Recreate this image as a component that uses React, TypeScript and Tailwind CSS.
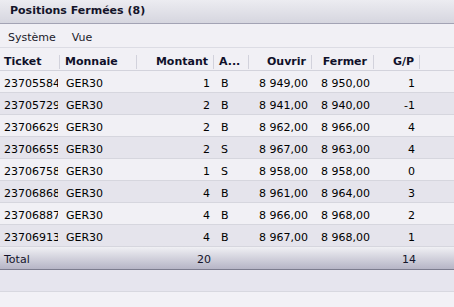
import React from "react";

const rows = [
  ["23705584", "GER30", "1", "B", "8 949,00", "8 950,00", "1"],
  ["23705729", "GER30", "2", "B", "8 941,00", "8 940,00", "-1"],
  ["23706629", "GER30", "2", "B", "8 962,00", "8 966,00", "4"],
  ["23706655", "GER30", "2", "S", "8 967,00", "8 963,00", "4"],
  ["23706758", "GER30", "1", "S", "8 958,00", "8 958,00", "0"],
  ["23706868", "GER30", "4", "B", "8 961,00", "8 964,00", "3"],
  ["23706887", "GER30", "4", "B", "8 966,00", "8 968,00", "2"],
  ["23706913", "GER30", "4", "B", "8 967,00", "8 968,00", "1"],
];

function Sep() {
  return <div className="w-px h-[14px] bg-[#d2d2dc] shrink-0" />;
}

export default function App() {
  return (
    <div
      className="w-[454px] h-[307px] bg-[#f2f1f6] text-[11px] leading-none text-black overflow-hidden flex flex-col"
      style={{ fontFamily: '"DejaVu Sans", Verdana, sans-serif' }}
    >
      {/* Title bar */}
      <div className="h-[24px] shrink-0 border-b border-[#a3a3b4] bg-gradient-to-b from-[#ececf1] to-[#d6d6df] flex items-center pl-[10px] pb-[2px] font-bold text-[#14142a]">
        Positions Fermées (8)
      </div>
      {/* Menu bar */}
      <div className="h-[24px] shrink-0 border-b border-[#dcdce4] bg-[#f1f0f5] flex items-center pl-[8px] pt-[4px] gap-[16px] text-[#1a1a2a]">
        <span>Système</span>
        <span>Vue</span>
      </div>
      {/* Header */}
      <div className="h-[23px] shrink-0 border-b border-[#d3d3dc] bg-[#f1f0f5] flex items-center pt-[5px] font-bold text-[#10102a]">
        <div className="w-[59px] pl-[4px] overflow-hidden whitespace-nowrap">Ticket</div>
        <Sep />
        <div className="w-[76px] pl-[5px] overflow-hidden whitespace-nowrap">Monnaie</div>
        <Sep />
        <div className="w-[76px] pr-[5px] text-right overflow-hidden whitespace-nowrap">Montant</div>
        <Sep />
        <div className="w-[34px] pl-[5px] overflow-hidden whitespace-nowrap">A...</div>
        <Sep />
        <div className="w-[62px] pr-[5px] text-right overflow-hidden whitespace-nowrap">Ouvrir</div>
        <Sep />
        <div className="w-[61px] pr-[6px] text-right overflow-hidden whitespace-nowrap">Fermer</div>
        <Sep />
        <div className="w-[45px] pr-[5px] text-right overflow-hidden whitespace-nowrap">G/P</div>
        <Sep />
      </div>
      {/* Rows */}
      {rows.map((r, i) => (
        <div
          key={i}
          className={
            "h-[22px] shrink-0 border-b border-[#d6d6de] flex items-center pt-[3px] " +
            (i % 2 === 0 ? "bg-[#f1f0f5]" : "bg-[#e5e4ec]")
          }
        >
          <div className="w-[60px] pl-[4px]">
            <div className="w-[54px] overflow-hidden whitespace-nowrap">{r[0]}</div>
          </div>
          <div className="w-[77px] pl-[6px] overflow-hidden whitespace-nowrap">{r[1]}</div>
          <div className="w-[77px] pr-[4px] text-right overflow-hidden whitespace-nowrap">{r[2]}</div>
          <div className="w-[35px] pl-[7px] overflow-hidden whitespace-nowrap">{r[3]}</div>
          <div className="w-[63px] pr-[4px] text-right overflow-hidden whitespace-nowrap">{r[4]}</div>
          <div className="w-[62px] pr-[4px] text-right overflow-hidden whitespace-nowrap">{r[5]}</div>
          <div className="w-[46px] pr-[5px] text-right overflow-hidden whitespace-nowrap">{r[6]}</div>
        </div>
      ))}
      {/* Total */}
      <div className="h-[23px] shrink-0 border-b border-[#7c7c8e] bg-gradient-to-b from-[#f0f0f4] to-[#b6b5c6] flex items-center pt-[2px] text-[#14142a]">
        <div className="w-[60px] pl-[4px]">Total</div>
        <div className="w-[77px]" />
        <div className="w-[77px] pr-[3px] text-right">20</div>
        <div className="w-[35px]" />
        <div className="w-[63px]" />
        <div className="w-[62px]" />
        <div className="w-[46px] pr-[4px] text-right">14</div>
      </div>
      {/* Footer band */}
      <div className="h-[22px] shrink-0 border-b border-[#d8d8e0] bg-[#e6e5ee]" />
      <div className="flex-1 bg-[#f2f1f6]" />
    </div>
  );
}
